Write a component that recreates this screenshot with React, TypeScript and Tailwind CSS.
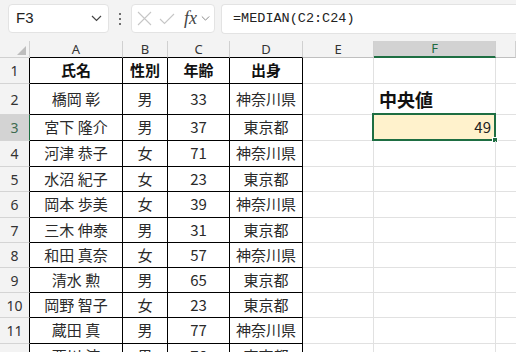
import React from 'react';

const cjk = "font-['Noto_Sans_CJK_JP',sans-serif]";

type Row = { n: number; h: string; cells: string[] };

const rows: Row[] = [
  { n: 1, h: 'h-[26px]', cells: ['氏名', '性別', '年齢', '出身'] },
  { n: 2, h: 'h-[31px]', cells: ['橋岡 彰', '男', '33', '神奈川県'] },
  { n: 3, h: 'h-[26px]', cells: ['宮下 隆介', '男', '37', '東京都'] },
  { n: 4, h: 'h-[26px]', cells: ['河津 恭子', '女', '71', '神奈川県'] },
  { n: 5, h: 'h-[25px]', cells: ['水沼 紀子', '女', '23', '東京都'] },
  { n: 6, h: 'h-[26px]', cells: ['岡本 歩美', '女', '39', '神奈川県'] },
  { n: 7, h: 'h-[25px]', cells: ['三木 伸泰', '男', '31', '東京都'] },
  { n: 8, h: 'h-[25px]', cells: ['和田 真奈', '女', '57', '神奈川県'] },
  { n: 9, h: 'h-[25px]', cells: ['清水 勲', '男', '65', '東京都'] },
  { n: 10, h: 'h-[25px]', cells: ['岡野 智子', '女', '23', '東京都'] },
  { n: 11, h: 'h-[26px]', cells: ['蔵田 真', '男', '77', '神奈川県'] },
  { n: 12, h: 'h-[26px]', cells: ['西川 涼', '男', '76', '東京都'] },
];

const cols = 'grid grid-cols-[30px_93px_45px_62px_73px_71px_122px_1fr]';

function Chevron({ className = '' }: { className?: string }) {
  return (
    <svg width="11" height="7" viewBox="0 0 11 7" className={className}>
      <path d="M1 1l4.5 4.5L10 1" fill="none" stroke="currentColor" strokeWidth="1.2" />
    </svg>
  );
}

function Toolbar() {
  return (
    <div className="h-[41px] bg-[#f3f3f3] flex items-start pt-[4px] pl-[8px]">
      <div className="w-[101px] h-[29px] bg-white rounded-[4px] border border-[#e3e3e3] flex items-center justify-between pl-[7px] pr-[6px]">
        <span className="text-[15px] text-[#222] font-['Liberation_Sans',sans-serif]">F3</span>
        <Chevron className="text-[#444]" />
      </div>
      <div className="w-[22px] h-[29px] flex flex-col items-center justify-center gap-[3px]">
        <span className="w-[2px] h-[2px] bg-[#444] rounded-full" />
        <span className="w-[2px] h-[2px] bg-[#444] rounded-full" />
        <span className="w-[2px] h-[2px] bg-[#444] rounded-full" />
      </div>
      <div className="w-[84px] h-[29px] bg-white rounded-[4px] border border-[#e3e3e3] flex items-center pl-[5px]">
        <svg width="15" height="15" viewBox="0 0 15 15">
          <path d="M1 1l13 13M14 1L1 14" stroke="#c6c6c6" strokeWidth="1.1" />
        </svg>
        <svg width="16" height="12" viewBox="0 0 16 12" className="ml-[7px]">
          <path d="M1 6l4.5 4.5L15 1" fill="none" stroke="#c6c6c6" strokeWidth="1.1" />
        </svg>
        <span className="ml-[9px] italic text-[18px] leading-none text-[#444] font-['Liberation_Serif',serif] -mt-[2px]">fx</span>
        <Chevron className="text-[#888] w-[9px] ml-[4px]" />
      </div>
      <div className="ml-[6px] flex-1 h-[30px] bg-white border border-[#e3e3e3] border-r-0 rounded-l-[4px] flex items-center pl-[11px]">
        <span className="text-[13.5px] text-[#222] font-['Liberation_Mono',monospace]">=MEDIAN(C2:C24)</span>
      </div>
    </div>
  );
}

function HeaderRow() {
  const letters = ['A', 'B', 'C', 'D', 'E', 'F', ''];
  return (
    <div className={`${cols} h-[17px] bg-[#f3f3f3] text-[13px] font-['Noto_Sans',sans-serif] leading-none`}>
      <div className="relative border-r border-b border-[#d0d0d0]">
        <svg width="9" height="9" viewBox="0 0 9 9" className="absolute right-[3px] bottom-[2px]">
          <path d="M9 0V9H0z" fill="#bdbdbd" />
        </svg>
      </div>
      {letters.map((l, i) => {
        const inTable = i < 4;
        const sel = l === 'F';
        return (
          <div
            key={i}
            className={`flex items-center justify-center border-r border-[#d0d0d0] ${
              sel
                ? 'bg-[#d2d2d2] text-[#1e6b40] border-b-2 border-b-[#1e6e42]'
                : inTable
                ? 'text-[#333] border-b border-b-black'
                : 'text-[#333] border-b border-b-[#bfbfbf]'
            }`}
          >
            {l}
          </div>
        );
      })}
    </div>
  );
}

function DataRow({ row }: { row: Row }) {
  const sel = row.n === 3;
  const head = row.n === 1;
  return (
    <div className={`${cols} ${row.h}`}>
      <div
        className={`flex items-center justify-center text-[14px] font-['Noto_Sans',sans-serif] border-b border-[#d4d4d4] border-r ${
          sel ? 'bg-[#d3d3d3] text-[#3f6b50] border-r-[#1e6e42]' : 'bg-[#f3f3f3] text-[#333] border-r-black'
        }`}
      >
        {row.n}
      </div>
      {row.cells.map((c, i) => (
        <div
          key={i}
          className={`flex items-center justify-center border-r border-b border-black text-[15px] whitespace-nowrap overflow-hidden ${cjk} ${
            head ? 'font-bold text-[#111]' : 'text-[#2a2a2a]'
          }`}
        >
          {c}
        </div>
      ))}
      <div className="border-r border-b border-[#e1e1e1]" />
      <div
        className={`relative border-r border-b border-[#e1e1e1] flex items-center ${
          sel ? 'bg-[#fff2cc] justify-end pr-[4px]' : ''
        }`}
      >
        {row.n === 2 && (
          <span className={`pl-[5px] text-[18px] font-bold text-[#111] ${cjk}`}>中央値</span>
        )}
        {sel && (
          <>
            <span className={`text-[15px] text-[#222] ${cjk}`}>49</span>
            <div className="absolute -left-[2px] -top-[2px] -right-[1px] -bottom-[1px] border-2 border-[#1e6e42] pointer-events-none" />
            <div className="absolute -right-[3px] -bottom-[3px] w-[6px] h-[6px] bg-[#1e6e42] border border-white" />
          </>
        )}
      </div>
      <div className="border-b border-[#e1e1e1]" />
    </div>
  );
}

export default function App() {
  return (
    <div className="w-[516px] h-[352px] overflow-hidden bg-white select-none">
      <Toolbar />
      <HeaderRow />
      {rows.map((r) => (
        <DataRow key={r.n} row={r} />
      ))}
    </div>
  );
}
